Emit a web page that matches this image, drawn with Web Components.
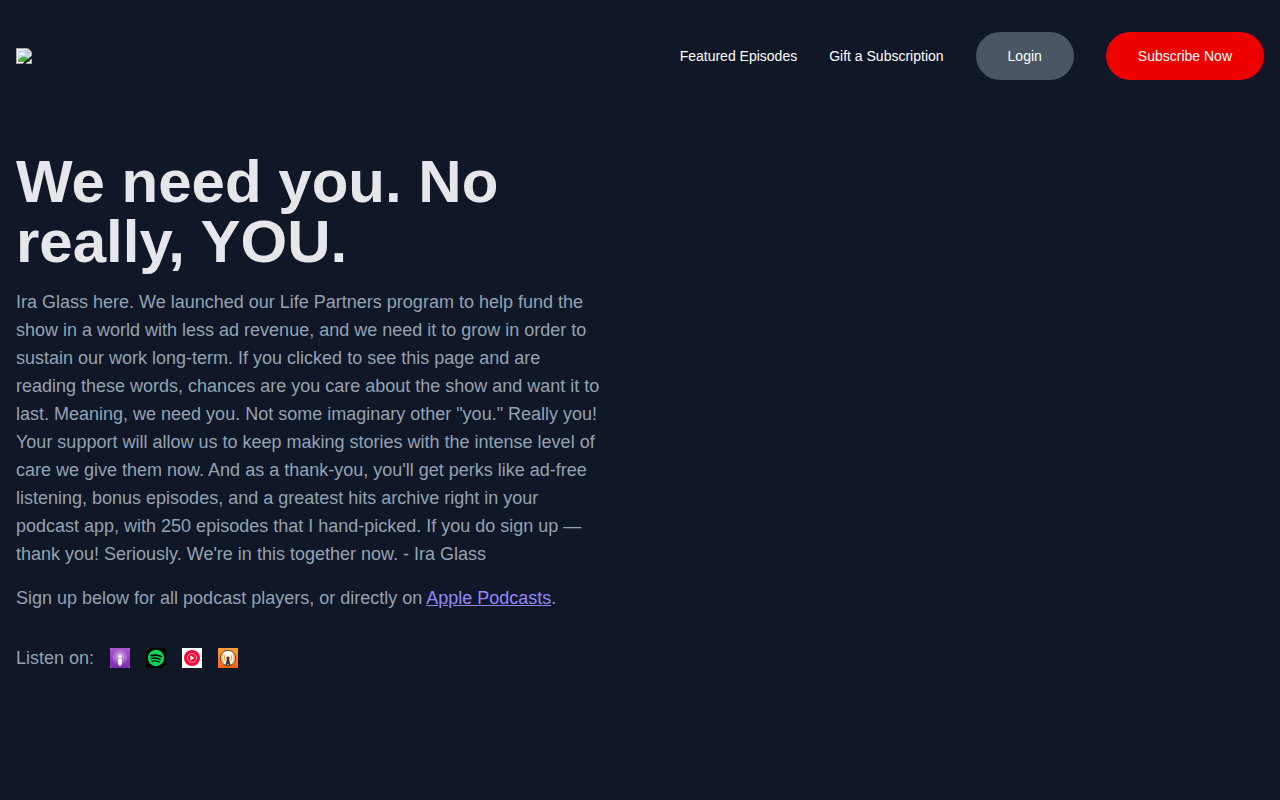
<!DOCTYPE html>
<html lang="en">
<head>
<meta charset="utf-8">
<meta name="viewport" content="width=device-width, initial-scale=1">
<title>Life Partners</title>
<style>
  body {
    margin: 0;
    background: #101726;
    color: #94a3b3;
    font-family: "Liberation Sans", Arial, sans-serif;
    font-size: 18px;
    line-height: 28px;
  }

  a {
    color: #9387ff;
  }

  p {
    margin: 0;
  }
</style>
</head>
<body>
<site-header>
  <nav-link href="#featured">Featured Episodes</nav-link>
  <nav-link href="#gift">Gift a Subscription</nav-link>
  <pill-button>Login</pill-button>
  <pill-button variant="primary">Subscribe Now</pill-button>
</site-header>
<main>
  <hero-section>
    <span slot="title">We need you. No really, YOU.</span>
    <p>Ira Glass here. We launched our Life Partners program to help fund the show in a world with less ad revenue, and we need it to grow in order to sustain our work long-term. If you clicked to see this page and are reading these words, chances are you care about the show and want it to last. Meaning, we need you. Not some imaginary other "you." Really you! Your support will allow us to keep making stories with the intense level of care we give them now. And as a thank-you, you'll get perks like ad-free listening, bonus episodes, and a greatest hits archive right in your podcast app, with 250 episodes that I hand-picked. If you do sign up — thank you! Seriously. We're in this together now. - Ira Glass</p>
    <p>Sign up below for all podcast players, or directly on <a href="#apple">Apple Podcasts</a>.</p>
    <listen-on slot="footer">Listen on:</listen-on>
  </hero-section>
</main>

<script>
const define = (name, html, setup) => {
  const template = document.createElement("template");
  template.innerHTML = html;

  window.customElements.define(
    name,
    class extends HTMLElement {
      constructor() {
        super();
        this.attachShadow({ mode: "open" });
        this.shadowRoot.appendChild(template.content.cloneNode(true));
        if (setup) setup(this, this.shadowRoot);
      }
    }
  );
};

define("site-header", /*html*/ `
<style>
  :host {
    display: block;
  }

  header {
    display: flex;
    align-items: center;
    justify-content: space-between;
    padding: 32px 16px;
  }

  nav {
    display: flex;
    flex-wrap: wrap;
    align-items: center;
    gap: 32px;
  }

  .logo, svg {
    display: block;
  }
</style>
<header>
  <a class="logo" href="#home" aria-label="Home">
    <svg width="16" height="16" viewBox="0 0 16 16">
      <path fill="#a4a4a4" d="M0 0h12l4 4v12H0z"/>
      <path fill="#fff" d="M1 1h10l4 4v10H1z"/>
      <path fill="#c6d8f5" d="M2 2h9v3h3v9H2z"/>
      <path fill="#fff" d="M3 7q0-1.500 1.500-1.500Q5 4 6.200 4t1.600 1.500Q9 5.500 9 7z"/>
      <path fill="#51ad42" d="M2 14v-1.500Q5 8.500 8 8.500q3.500 0 6 4V14z"/>
      <path fill="#e8e8e8" stroke="#a4a4a4" stroke-width=".8" d="M11.400.6v4h4"/>
      <path fill="#101726" d="M16 7.500v3L9 16H6.500l2.800-3.200 2.700-1.300 1.500-2z"/>
    </svg>
  </a>
  <nav><slot></slot></nav>
</header>
`);

define("nav-link", /*html*/ `
<style>
  :host {
    display: block;
  }

  a {
    display: block;
    color: #fff;
    font-size: 14px;
    line-height: 20px;
    text-decoration: none;
  }
</style>
<a><slot></slot></a>
`, (host, root) => {
  root.querySelector("a").href = host.getAttribute("href") || "#";
});

define("pill-button", /*html*/ `
<style>
  :host {
    display: block;
  }

  button {
    display: block;
    padding: 14px 32px;
    border: 0;
    border-radius: 24px;
    background: #4b5665;
    color: #fff;
    font: inherit;
    font-size: 14px;
    line-height: 20px;
    cursor: pointer;
  }

  :host([variant="primary"]) button {
    background: #ee0000;
  }
</style>
<button type="button"><slot></slot></button>
`);

define("hero-section", /*html*/ `
<style>
  :host {
    display: grid;
    grid-template-columns: 1fr 1fr;
    gap: 80px;
    padding: 40px 16px;
  }

  h1 {
    margin: 0 0 16px;
    color: #e5e7eb;
    font-size: 60px;
    font-weight: 700;
    line-height: 60px;
  }

  .copy {
    display: grid;
    gap: 16px;
    margin-bottom: 32px;
  }

  @media (max-width: 800px) {
    :host {
      grid-template-columns: 1fr;
    }
  }
</style>
<section>
  <h1><slot name="title"></slot></h1>
  <div class="copy"><slot></slot></div>
  <slot name="footer"></slot>
</section>
`);

define("listen-on", /*html*/ `
<style>
  :host {
    display: flex;
    align-items: center;
    gap: 16px;
  }

  a, svg {
    display: block;
    width: 20px;
    height: 20px;
  }
</style>
<span><slot></slot></span>
<a href="#apple" aria-label="Apple Podcasts">
  <svg viewBox="0 0 20 20">
    <defs>
      <linearGradient id="purple" x2="0" y2="1">
        <stop stop-color="#a855d0"/>
        <stop offset="1" stop-color="#7a2cb0"/>
      </linearGradient>
    </defs>
    <rect width="20" height="20" fill="#c38fe0"/>
    <rect width="20" height="20" rx="2" fill="url(#purple)"/>
    <circle cx="10" cy="9" r="6.800" fill="#fff" fill-opacity=".18" stroke="#dcb4f0" stroke-opacity=".3"/>
    <circle cx="10" cy="9" r="4.200" fill="#fff" fill-opacity=".25" stroke="#e4c4f4" stroke-opacity=".3"/>
    <circle cx="10" cy="8.500" r="2" fill="#fff"/>
    <path fill="#fff" d="M8 12q0-1.500 2-1.500t2 1.500l-.5 4.500q-.2 1.300-1.500 1.300t-1.500-1.300z"/>
  </svg>
</a>
<a href="#spotify" aria-label="Spotify">
  <svg viewBox="0 0 20 20">
    <rect width="20" height="20" rx="1" fill="#000"/>
    <path fill="none" stroke="#4b4d50" stroke-width=".7" d="M.3 3Q.3.3 3 .3M17 19.700q2.700 0 2.700-2.700"/>
    <circle cx="10" cy="10" r="8.200" fill="#05d957"/>
    <g fill="none" stroke="#000" stroke-linecap="round">
      <path stroke-width="1.800" d="M5 7.600q5.600-1.500 10.300 1"/>
      <path stroke-width="1.500" d="M5.400 10.500q4.700-1.300 8.700 1"/>
      <path stroke-width="1.200" d="M5.800 13.200q4-1 7.200.9"/>
    </g>
  </svg>
</a>
<a href="#youtube-music" aria-label="YouTube Music">
  <svg viewBox="0 0 20 20">
    <rect width="20" height="20" fill="#fff"/>
    <circle cx="10" cy="10" r="8" fill="#ff0033"/>
    <circle cx="10" cy="10" r="4.500" fill="none" stroke="#fff" stroke-width=".7"/>
    <path fill="#fff" d="M8.300 7.500v5l4.200-2.500z"/>
  </svg>
</a>
<a href="#overcast" aria-label="Overcast">
  <svg viewBox="0 0 20 20">
    <defs>
      <linearGradient id="orange" x2="0" y2="1">
        <stop stop-color="#ffa13a"/>
        <stop offset="1" stop-color="#ff5e08"/>
      </linearGradient>
    </defs>
    <rect width="20" height="20" fill="url(#orange)"/>
    <circle cx="10" cy="10" r="7.700" fill="#fff6e8" stroke="#4a3426" stroke-width=".9"/>
    <g fill="none" stroke="#ffa24a" stroke-width="1.300" stroke-linecap="round">
      <path d="M7 7.500q-1.400 2.500 0 5M13 7.500q1.400 2.500 0 5M4.700 6.200q-2 4 0 8M15.300 6.200q2 4 0 8"/>
    </g>
    <circle cx="10" cy="10" r="1.600" fill="#3a3532"/>
    <path fill="#3a3532" d="M9.200 10h1.600l1.800 7.300h-1.600L10 15.500l-1 1.800H7.400z"/>
  </svg>
</a>
`);
</script>
</body>
</html>
